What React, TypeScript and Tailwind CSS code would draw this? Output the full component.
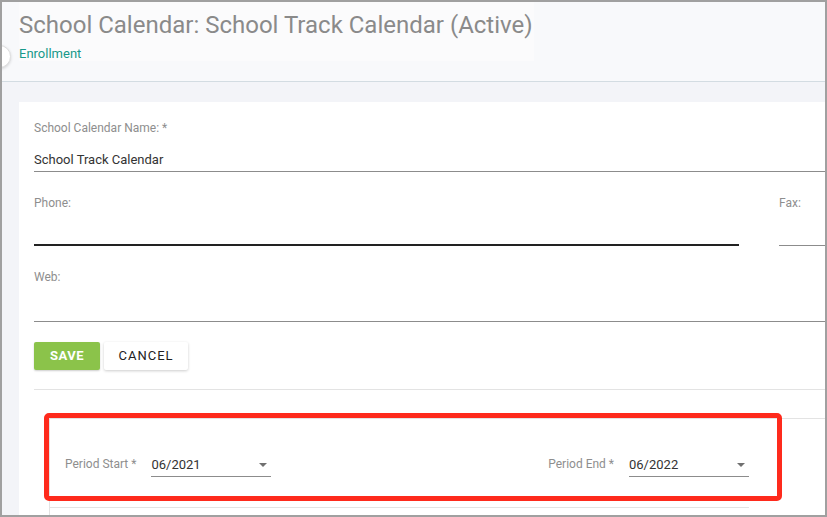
import React from "react";

const Caret: React.FC = () => (
  <svg width="8" height="4" viewBox="0 0 8 4" className="shrink-0">
    <path d="M0 0h8L4 4z" fill="#707070" />
  </svg>
);

const PeriodSelect: React.FC<{ label: string; value: string }> = ({ label, value }) => (
  <div className="flex items-end gap-[15px]">
    <span className="mb-[6px] text-[12px] leading-[14px] text-[#8e8e8e]">{label}</span>
    <div className="flex h-[22px] w-[120px] items-center justify-between border-b border-[#8c8c8c] pb-[1px] pr-[4px]">
      <span className="text-[13px] leading-[16px] text-[#333]">{value}</span>
      <Caret />
    </div>
  </div>
);

const App: React.FC = () => {
  return (
    <div
      className="relative h-[517px] w-[827px] overflow-hidden border-2 border-[#a0a0a0] bg-[#f3f4f8]"
      style={{ fontFamily: "Roboto, 'Liberation Sans', sans-serif" }}
    >
      {/* header */}
      <div className="h-[80px] border-b border-[#d3dce2] bg-[#f8f9fb] pl-[17px]">
        <div className="h-[59px] w-[515px] bg-[#fbfbfc] pt-[9px]">
          <h1 className="whitespace-nowrap text-[24px] leading-[28px] text-[#8a8a8a]">
            School Calendar: School Track Calendar (Active)
          </h1>
          <div className="mt-[7px] text-[13px] leading-[16px] text-[#17998a]">Enrollment</div>
        </div>
      </div>

      {/* collapse handle */}
      <div className="absolute left-[-14px] top-[43px] h-[23px] w-[23px] rounded-full border border-[#dedede] bg-white shadow-[0_1px_3px_rgba(0,0,0,0.15)]"></div>

      <div className="pl-[17px] pt-[20px]">
        <div className="w-[830px] bg-white pl-[15px] pt-[19px]">
          <div className="text-[12px] leading-[14px] text-[#8e8e8e]">School Calendar Name: *</div>
          <div className="mt-[17px] h-[20px] border-b border-[#8c8c8c] text-[13px] leading-[16px] text-[#333]">
            School Track Calendar
          </div>

          <div className="mt-[24px] flex gap-[40px]">
            <div className="w-[705px]">
              <div className="text-[12px] leading-[14px] text-[#8e8e8e]">Phone:</div>
              <div className="h-[36px] border-b-2 border-[#222]"></div>
            </div>
            <div className="flex-1">
              <div className="text-[12px] leading-[14px] text-[#8e8e8e]">Fax:</div>
              <div className="h-[36px] border-b border-[#8c8c8c]"></div>
            </div>
          </div>

          <div className="mt-[24px]">
            <div className="text-[12px] leading-[14px] text-[#8e8e8e]">Web:</div>
            <div className="h-[38px] border-b border-[#8c8c8c]"></div>
          </div>

          <div className="mt-[20px] flex gap-[4px]">
            <button className="h-[28px] w-[66px] rounded-[2px] bg-[#8bc34a] text-[13px] font-bold tracking-[0.5px] text-white shadow-[0_1px_2px_rgba(0,0,0,0.2)]">
              SAVE
            </button>
            <button className="h-[28px] w-[84px] rounded-[2px] bg-white text-[13px] font-normal tracking-[1px] text-[#222] shadow-[0_1px_3px_rgba(0,0,0,0.2)]">
              CANCEL
            </button>
          </div>

          <div className="mt-[19px] border-t border-[#e3e3e3]"></div>

          {/* period section */}
          <div className="ml-[15px] mt-[28px] border-l border-t border-[#e3e3e3]">
            <div className="flex h-[89px] w-[699px] items-end justify-between border-b border-[#e3e3e3] pb-[30px] pl-[15px]">
              <PeriodSelect label="Period Start *" value="06/2021" />
              <PeriodSelect label="Period End *" value="06/2022" />
            </div>
            <div className="h-[40px]"></div>
          </div>
        </div>
      </div>

      {/* highlight annotation */}
      <div className="absolute left-[42px] top-[411px] h-[88px] w-[738px] rounded-[5px] border-[5px] border-[#fe2a1c]"></div>
    </div>
  );
};

export default App;
